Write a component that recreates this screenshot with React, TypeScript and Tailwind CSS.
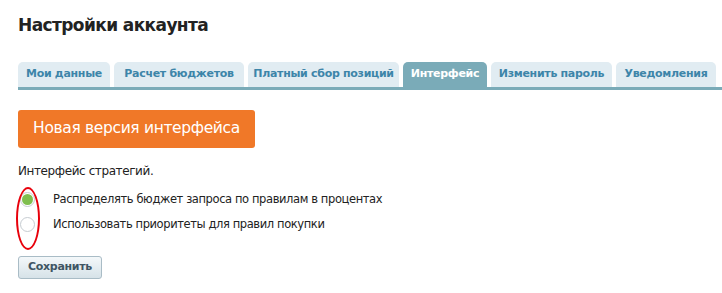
import React from "react";

const tabs = [
  { label: "Мои данные", w: "w-[92px]" },
  { label: "Расчет бюджетов", w: "w-[130px]" },
  { label: "Платный сбор позиций", w: "w-[151px]" },
  { label: "Интерфейс", w: "w-[84px]", active: true },
  { label: "Изменить пароль", w: "w-[121px]" },
  { label: "Уведомления", w: "w-[100px]" },
];

export default function App() {
  return (
    <div className="w-[722px] h-[293px] bg-white overflow-hidden pl-[18px] pt-[14px] text-[#222]" style={{ fontFamily: '"DejaVu Sans", Verdana, sans-serif' }}>
      <h1 className="text-[17px] leading-[22px] font-bold text-[#222] tracking-[-0.6px]">Настройки аккаунта</h1>
      <div className="mt-[26px] flex gap-[4px] border-b-[3px] border-[#7aabb8]">
        {tabs.map((t) => (
          <div
            key={t.label}
            className={`${t.w} h-[25px] rounded-t-[5px] flex items-center justify-center text-[11px] font-bold tracking-[-0.3px] ${t.active ? "bg-[#7aabb8] text-white" : "bg-[#e1ecf2] text-[#3d85a9]"}`}
          >
            {t.label}
          </div>
        ))}
      </div>
      <button className="mt-[20px] w-[237px] h-[38px] bg-[#f07828] rounded-[3px] text-white text-[15.5px] flex items-center justify-center tracking-[-0.35px]">
        Новая версия интерфейса
      </button>
      <div className="mt-[16px] text-[12px] leading-[15px] tracking-[-0.4px]">Интерфейс стратегий.</div>
      <div className="relative mt-[13px] flex flex-col gap-[10px]">
        <div className="absolute left-[-2px] top-[-5px] w-[24px] h-[63px] border-2 border-[#e8000b] rounded-[50%]" />
        <label className="flex items-center h-[15px]">
          <span className="ml-[2px] w-[15px] h-[15px] rounded-full border border-[#c6ccd1] bg-white flex items-center justify-center">
            <span className="w-[11px] h-[11px] rounded-full bg-[#7fbe4e]" />
          </span>
          <span className="ml-[18px] text-[11.5px] tracking-[-0.4px]">Распределять бюджет запроса по правилам в процентах</span>
        </label>
        <label className="flex items-center h-[15px]">
          <span className="ml-[2px] w-[15px] h-[15px] rounded-full border border-[#c6ccd1] bg-white" />
          <span className="ml-[18px] text-[11.5px] tracking-[-0.4px]">Использовать приоритеты для правил покупки</span>
        </label>
      </div>
      <button className="mt-[24px] w-[84px] h-[23px] rounded-[3px] border border-[#a9bcc6] bg-gradient-to-b from-[#f4f8fa] to-[#d6e2e8] text-[11px] font-bold text-[#3f5563] tracking-[-0.3px] flex items-center justify-center">
        Сохранить
      </button>
    </div>
  );
}
